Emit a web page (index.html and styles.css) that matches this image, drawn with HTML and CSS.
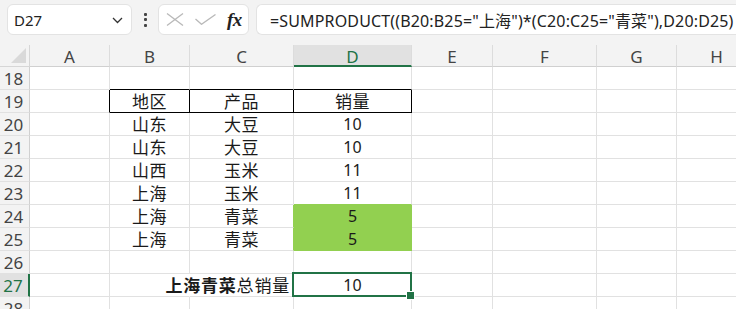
FILE: index.html
```html
<!DOCTYPE html>
<html lang="zh-CN">
<head>
<meta charset="utf-8">
<title>Sheet</title>
<link rel="stylesheet" href="styles.css">
</head>
<body>
<div class="app">
  <div class="toolbar">
    <div class="namebox">
      <span class="ref">D27</span>
      <svg class="chev" width="11" height="7" viewBox="0 0 11 7"><path d="M1 1 L5.5 5.5 L10 1" fill="none" stroke="#333" stroke-width="1.3"/></svg>
    </div>
    <div class="dots"><i></i><i></i><i></i></div>
    <div class="fxbox">
      <svg width="18" height="13" viewBox="0 0 18 13"><path d="M1 0.5 L17 12.5 M17 0.5 L1 12.5" stroke="#b9b9b9" stroke-width="1.3" fill="none"/></svg>
      <svg width="21" height="11" viewBox="0 0 21 11"><path d="M0.5 5 L6.5 10.3 L20.5 0.5" stroke="#b9b9b9" stroke-width="1.3" fill="none"/></svg>
      <span class="fx">fx</span>
    </div>
    <div class="formula">=SUMPRODUCT((B20:B25="上海")*(C20:C25="青菜"),D20:D25)</div>
  </div>
  <div class="sheet">
    <div class="row head">
      <div class="corner"><span class="tri"></span></div>
      <div class="ch">A</div><div class="ch">B</div><div class="ch">C</div><div class="ch sel">D</div><div class="ch">E</div><div class="ch">F</div><div class="ch">G</div><div class="ch">H</div>
    </div>
    <div class="row">
      <div class="rh">18</div>
      <div class="c"></div><div class="c bb"></div><div class="c bb"></div><div class="c bb"></div><div class="c"></div><div class="c"></div><div class="c"></div><div class="c"></div>
    </div>
    <div class="row">
      <div class="rh">19</div>
      <div class="c br"></div><div class="c br bb">地区</div><div class="c br bb">产品</div><div class="c br bb">销量</div><div class="c"></div><div class="c"></div><div class="c"></div><div class="c"></div>
    </div>
    <div class="row">
      <div class="rh">20</div>
      <div class="c"></div><div class="c">山东</div><div class="c">大豆</div><div class="c num">10</div><div class="c"></div><div class="c"></div><div class="c"></div><div class="c"></div>
    </div>
    <div class="row">
      <div class="rh">21</div>
      <div class="c"></div><div class="c">山东</div><div class="c">大豆</div><div class="c num">10</div><div class="c"></div><div class="c"></div><div class="c"></div><div class="c"></div>
    </div>
    <div class="row">
      <div class="rh">22</div>
      <div class="c"></div><div class="c">山西</div><div class="c">玉米</div><div class="c num">11</div><div class="c"></div><div class="c"></div><div class="c"></div><div class="c"></div>
    </div>
    <div class="row">
      <div class="rh">23</div>
      <div class="c"></div><div class="c">上海</div><div class="c">玉米</div><div class="c num gb">11</div><div class="c"></div><div class="c"></div><div class="c"></div><div class="c"></div>
    </div>
    <div class="row">
      <div class="rh">24</div>
      <div class="c"></div><div class="c">上海</div><div class="c gr">青菜</div><div class="c num fill">5</div><div class="c"></div><div class="c"></div><div class="c"></div><div class="c"></div>
    </div>
    <div class="row">
      <div class="rh">25</div>
      <div class="c"></div><div class="c">上海</div><div class="c gr">青菜</div><div class="c num fill">5</div><div class="c"></div><div class="c"></div><div class="c"></div><div class="c"></div>
    </div>
    <div class="row">
      <div class="rh">26</div>
      <div class="c"></div><div class="c"></div><div class="c"></div><div class="c"></div><div class="c"></div><div class="c"></div><div class="c"></div><div class="c"></div>
    </div>
    <div class="row">
      <div class="rh sel">27</div>
      <div class="c"></div><div class="c nr"></div><div class="c label"><span class="lbl"><b>上海青菜</b>总销量</span></div><div class="c num active">10</div><div class="c"></div><div class="c"></div><div class="c"></div><div class="c"></div>
    </div>
    <div class="row">
      <div class="rh">28</div>
      <div class="c"></div><div class="c"></div><div class="c"></div><div class="c"></div><div class="c"></div><div class="c"></div><div class="c"></div><div class="c"></div>
    </div>
  </div>
</div>
</body>
</html>
```

FILE: styles.css
```css
* { box-sizing: border-box; }
html, body { margin: 0; padding: 0; }
body {
  width: 736px;
  height: 309px;
  overflow: hidden;
  background: #ffffff;
  font-family: "Noto Sans", "Noto Sans CJK SC", sans-serif;
}
.app { width: 736px; height: 309px; overflow: hidden; }

.toolbar {
  height: 45px;
  background: #f3f3f3;
  display: flex;
  align-items: flex-start;
  padding: 4px 0 0 7px;
  white-space: nowrap;
}
.namebox {
  width: 125px;
  height: 31px;
  background: #fff;
  border: 1px solid #e3e3e3;
  border-radius: 6px;
  display: flex;
  align-items: center;
  justify-content: space-between;
  padding: 0 8px 0 6px;
  flex: none;
}
.ref { font-size: 15px; color: #222; }
.chev { margin-top: 2px; }
.dots {
  width: 26px;
  height: 31px;
  display: flex;
  flex-direction: column;
  align-items: center;
  justify-content: center;
  gap: 2.5px;
  flex: none;
}
.dots i { display: block; width: 3px; height: 3px; background: #444; border-radius: 1px; }
.fxbox {
  width: 91px;
  height: 31px;
  background: #fff;
  border: 1px solid #e3e3e3;
  border-radius: 6px;
  display: flex;
  align-items: center;
  padding: 0 0 0 7px;
  gap: 12px;
  flex: none;
}
.fxbox svg:nth-child(2) { margin-left: -1px; }
.fx {
  font-family: "Liberation Serif", serif;
  font-style: italic;
  font-weight: bold;
  font-size: 19px;
  color: #222;
  margin-left: -1px;
  letter-spacing: -0.5px;
}
.formula {
  margin-left: 7px;
  width: 500px;
  height: 31px;
  background: #fff;
  border: 1px solid #e3e3e3;
  border-radius: 6px 0 0 6px;
  border-right: none;
  padding: 0 0 0 13px;
  display: flex;
  align-items: center;
  font-size: 16px;
  letter-spacing: 0.15px;
  color: #222;
  flex: none;
  overflow: hidden;
}

.sheet { background: #fff; }
.row {
  display: grid;
  grid-template-columns: 30px 80px 80px 104px 118px 81px 104px 80px 80px;
  height: 23px;
}
.row.head { height: 22px; background: #f3f3f3; }
.corner {
  border-right: 1px solid #d6d6d6;
  border-bottom: 1px solid #d6d6d6;
  position: relative;
}
.tri {
  position: absolute;
  right: 3px;
  bottom: 3px;
  width: 0;
  height: 0;
  border-left: 15px solid transparent;
  border-bottom: 15px solid #d9d9d9;
}
.ch {
  border-right: 1px solid #dcdcdc;
  border-bottom: 1px solid #d0d0d0;
  display: flex;
  align-items: center;
  justify-content: center;
  font-size: 17px;
  color: #444;
  line-height: 1;
  padding-top: 1px;
}
.ch.sel {
  background: #e1e1e1;
  color: #217346;
  border-bottom: 2px solid #217346;
  padding-top: 2px;
}
.rh {
  background: #f3f3f3;
  border-right: 1px solid #d0d0d0;
  border-bottom: 1px solid #e1e1e1;
  display: flex;
  align-items: center;
  justify-content: center;
  font-size: 17px;
  color: #444;
  line-height: 1;
  padding-top: 1px;
  padding-right: 2px;
}
.rh.sel {
  background: #e1e1e1;
  color: #217346;
  border-right: 2px solid #217346;
}
.c {
  border-right: 1px solid #e1e1e1;
  border-bottom: 1px solid #e1e1e1;
  display: flex;
  align-items: flex-end;
  justify-content: center;
  font-family: "Noto Sans CJK SC", "Noto Sans", sans-serif;
  font-size: 17px;
  line-height: 22px;
  letter-spacing: 0.5px;
  color: #1a1a1a;
  white-space: nowrap;
}
.c.num { font-family: "Noto Sans", "Noto Sans CJK SC", sans-serif; font-size: 16px; letter-spacing: 0; }
.c.bb { border-bottom-color: #000; }
.c.br { border-right-color: #000; }
.c.fill { background: #92d050; border-right-color: #92d050; border-bottom-color: #92d050; }
.c.gb { border-bottom-color: #92d050; }
.c.gr { border-right-color: #92d050; }
.c.nr { border-right-color: transparent; }
.c.label {
  justify-content: flex-end;
  padding-right: 3px;
  overflow: visible;
  letter-spacing: 0.8px;
}
.lbl { display: block; }
.lbl b { font-weight: 700; }
.c.active { position: relative; }
.c.active::before {
  content: "";
  position: absolute;
  top: -2px;
  left: -2px;
  right: -1px;
  bottom: -1px;
  border: 2px solid #217346;
}
.c.active::after {
  content: "";
  position: absolute;
  right: -4px;
  bottom: -4px;
  width: 7px;
  height: 7px;
  background: #217346;
  border: 1px solid #fff;
}
```
